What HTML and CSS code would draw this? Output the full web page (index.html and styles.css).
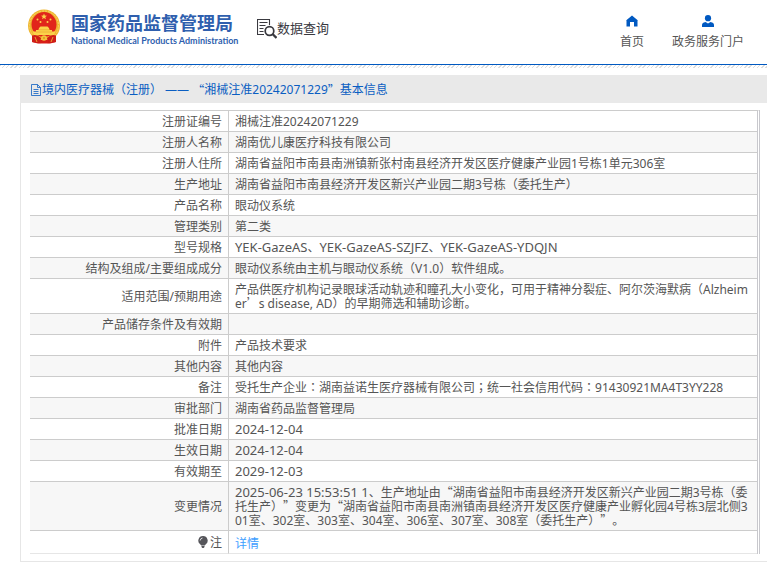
FILE: index.html
```html
<!DOCTYPE html>
<html lang="zh-CN">
<head>
<meta charset="utf-8">
<title>国家药品监督管理局 数据查询</title>
<link rel="stylesheet" href="styles.css">
</head>
<body>
<header class="header">
  <div class="brand">
    <svg class="emblem" viewBox="0 0 32 35" aria-hidden="true">
      <path d="M5 23 L4 33 L10 34.500 L16 33.500 L22 34.500 L28 33 L27 23Z" fill="#d81e18"/>
      <circle cx="16" cy="16.500" r="16" fill="#efb62f"/>
      <circle cx="16" cy="16.500" r="14.500" fill="none" stroke="#f8d464" stroke-width="1" stroke-dasharray="2 1"/>
      <circle cx="16" cy="15.500" r="12.500" fill="#e1251b"/>
      <path d="M16 4.500l.8 2.100 2.200.1-1.700 1.400.6 2.200-1.900-1.200-1.900 1.200.6-2.200L13 6.700l2.200-.1z" fill="#fbd24a"/>
      <g fill="#fbd24a"><circle cx="9.500" cy="10.500" r="1"/><circle cx="12.500" cy="13" r="1"/><circle cx="19.500" cy="13" r="1"/><circle cx="22.500" cy="10.500" r="1"/>
      <path d="M11 19 L12.500 17.500 H19.500 L21 19 L21.500 21 H24 V22.500 H27.500 L26 26 H6 L4.500 22.500 H8 V21 H10.500Z"/></g>
      <path d="M10.500 20.800h11M8 23h16" stroke="#e7a028" stroke-width=".6"/>
      <path d="M4 26.500 Q9 25 13 29 L12 34.500 L4 33Z M28 26.500 Q23 25 19 29 L20 34.500 L28 33Z" fill="#cf1d17"/>
      <path d="M12 31h8v3.500h-8z" fill="#d81e18"/>
      <circle cx="16" cy="29" r="2.800" fill="#f5c33d"/><circle cx="16" cy="29" r="1.100" fill="#d99725"/>
      <path d="M7 28l2 5M25 28l-2 5" stroke="#f2bf3b" stroke-width=".8" fill="none"/>
    </svg>
    <div class="names">
      <div class="name-zh">国家药品监督管理局</div>
      <div class="name-en">National Medical Products Administration</div>
    </div>
  </div>
  <div class="section">
    <svg class="query" viewBox="0 0 20 20" fill="none" stroke="#39393f" aria-hidden="true">
      <path d="M7 15.500H.5V.5h12V6M2.500 3.500h8M2.500 6.500h6M2.500 9.500h4M2.500 12.500h4" stroke-width="1.100"/>
      <circle cx="12.500" cy="12" r="4.300" stroke-width="1.700"/>
      <path d="M15.500 15l4 4" stroke-width="2.300"/>
    </svg>
    <span>数据查询</span>
  </div>
  <nav class="nav">
    <a href="#"><svg viewBox="0 0 12 12" aria-hidden="true"><path d="M6 .5 12 5.500H11.500V11.500H8V7H4v4.500H.5V5.500H0z" fill="#0059c1"/></svg>首页</a>
    <a href="#"><svg viewBox="0 0 12 12" aria-hidden="true"><circle cx="6" cy="3.200" r="3.100" fill="#0059c1"/><path d="M0 12V10Q0 7.500 3.500 7L6 8.500 8.500 7Q12 7.500 12 10V12z" fill="#0059c1"/></svg>政务服务门户</a>
  </nav>
</header>
<main class="panel">
  <h1 class="title"><svg viewBox="0 0 10 12" fill="none" stroke="#0b5ec2" stroke-width=".8" aria-hidden="true"><path d="M.5.500H6.500L9.500 3.500V11.500H.5zM6.500.500V3.500H9.500M2.500 5.500h5M2.500 7.500h5M2.500 9.500h5"/></svg>境内医疗器械（注册） —— <span class="qm">“</span>湘械注准20242071229<span class="qm">”</span>基本信息</h1>
  <div class="body">
    <table class="info">
      <tr><th scope="row">注册证编号</th><td>湘械注准20242071229</td></tr>
      <tr><th scope="row">注册人名称</th><td>湖南优儿康医疗科技有限公司</td></tr>
      <tr><th scope="row">注册人住所</th><td>湖南省益阳市南县南洲镇新张村南县经济开发区医疗健康产业园1号栋1单元306室</td></tr>
      <tr><th scope="row">生产地址</th><td>湖南省益阳市南县经济开发区新兴产业园二期3号栋（委托生产）</td></tr>
      <tr><th scope="row">产品名称</th><td>眼动仪系统</td></tr>
      <tr><th scope="row">管理类别</th><td>第二类</td></tr>
      <tr><th scope="row">型号规格</th><td><span class="code">YEK-GazeAS</span>、<span class="code">YEK-GazeAS-SZJFZ</span>、<span class="code">YEK-GazeAS-YDQJN</span></td></tr>
      <tr><th scope="row">结构及组成/主要组成成分</th><td>眼动仪系统由主机与眼动仪系统（V1.0）软件组成。</td></tr>
      <tr><th scope="row">适用范围/预期用途</th><td>产品供医疗机构记录眼球活动轨迹和瞳孔大小变化，可用于精神分裂症、阿尔茨海默病（Alzheimer<span class="qm">’</span>s disease, AD）的早期筛选和辅助诊断。</td></tr>
      <tr><th scope="row">产品储存条件及有效期</th><td></td></tr>
      <tr><th scope="row">附件</th><td>产品技术要求</td></tr>
      <tr><th scope="row">其他内容</th><td>其他内容</td></tr>
      <tr><th scope="row">备注</th><td>受托生产企业<span class="mid" lang="zh-TW">：</span>湖南益诺生医疗器械有限公司<span class="mid" lang="zh-TW">；</span>统一社会信用代码<span class="mid" lang="zh-TW">：</span>91430921MA4T3YY228</td></tr>
      <tr><th scope="row">审批部门</th><td>湖南省药品监督管理局</td></tr>
      <tr><th scope="row">批准日期</th><td><span class="code">2024-12-04</span></td></tr>
      <tr><th scope="row">生效日期</th><td><span class="code">2024-12-04</span></td></tr>
      <tr><th scope="row">有效期至</th><td><span class="code">2029-12-03</span></td></tr>
      <tr><th scope="row">变更情况</th><td><span class="code">2025-06-23 15:53:51 1</span>、生产地址由<span class="qm">“</span>湖南省益阳市南县经济开发区新兴产业园二期3号栋（委托生产）<span class="qm">”</span>变更为<span class="qm">“</span>湖南省益阳市南县南洲镇南县经济开发区医疗健康产业孵化园4号栋3层北侧301室、302室、303室、304室、306室、307室、308室（委托生产）<span class="qm">”</span>。</td></tr>
      <tr class="note"><th scope="row"><svg viewBox="0 0 10 12" aria-hidden="true"><path d="M5 0a4.600 4.600 0 0 1 2.800 8.300L6.800 9.500H3.200L2.200 8.300A4.600 4.600 0 0 1 5 0zM3.500 10h3v1L5.700 12H4.300L3.500 11z" fill="#55555a"/><path d="M2.200 4.500Q2.500 2.200 4.500 2" fill="none" stroke="#fff" stroke-width=".8"/></svg>注</th><td><a href="#">详情</a></td></tr>
    </table>
  </div>
</main>
</body>
</html>
```
FILE: styles.css
```css
* { box-sizing: border-box; }

body {
  margin: 0;
  background: #fff;
  color: #555;
  font: 12px/14px "Noto Sans", "Noto Sans CJK SC", sans-serif;
  text-spacing-trim: space-all;
}

a { text-decoration: none; }

.header {
  display: flex;
  align-items: flex-start;
  height: 68px;
  padding: 9px 23px 0 28px;
  background:
    linear-gradient(#0059c1, #0059c1) 0 64px / 100% 1px no-repeat,
    repeating-linear-gradient(135deg, #ddd 0 1px, #fff 1px 3px) 0 65px / 100% 3px no-repeat;
}

.brand { display: flex; gap: 11px; }
.emblem { width: 32px; height: 35px; }
.names { width: 160px; color: #2f5fae; white-space: nowrap; }
.name-zh {
  padding-top: 2px;
  font-size: 18px;
  line-height: 24px;
  font-weight: 700;
}
.name-en {
  font-family: Lato, sans-serif;
  font-size: 9px;
  font-weight: 700;
  line-height: 12px;
}

.section {
  display: flex;
  margin: 10px 0 0 26px;
  color: #39393f;
  font-size: 13px;
  line-height: 18px;
  white-space: nowrap;
}
.query { width: 20px; height: 20px; }

.nav {
  display: flex;
  gap: 28px;
  margin: 6px 0 0 auto;
}
.nav a {
  display: flex;
  flex-direction: column;
  align-items: center;
  gap: 8px;
  color: #555;
  white-space: nowrap;
}
.nav svg { width: 12px; height: 12px; }

.panel { margin: 7px 0 0 20px; }

.title {
  display: flex;
  align-items: center;
  height: 28px;
  margin: 0;
  padding: 2px 0 0 11px;
  background: #e9e9e9;
  color: #0b5ec2;
  font-size: 12px;
  font-weight: 400;
  white-space: pre;
}
.title svg { width: 10px; height: 12px; margin-right: 1px; }

.qm { font-family: "Noto Sans CJK SC", sans-serif; line-height: 1; }
.mid { font-family: "Noto Sans CJK TC", sans-serif; line-height: 1; }
.code { font-size: 13px; line-height: 1; }

.body {
  padding: 7px 7px 7px 9px;
  border: solid #e6e6e6;
  border-width: 0 0 1px 1px;
}

.info {
  width: 100%;
  border-spacing: 0;
  border-top: 1px solid #ccc;
  border-right: 3px double #c8c8cd;
  word-break: break-all;
  line-break: anywhere;
}
.info th,
.info td {
  height: 21px;
  padding: 4px 6px 2px;
  border-bottom: 1px solid #ccc;
  vertical-align: middle;
}
.info th {
  width: 199px;
  border-right: 1px solid #ccc;
  font-weight: 400;
  text-align: right;
}
.info td { text-align: left; }
.info tr:nth-child(even) { background: #f7f7f7; }
.info .note th,
.info .note td { height: 23px; border-bottom-color: #e6e6e6; }
.info .note td { padding-top: 6px; }
.info svg { width: 10px; height: 12px; margin-right: 2px; vertical-align: -1px; }
.info a { color: #409eff; }
```
